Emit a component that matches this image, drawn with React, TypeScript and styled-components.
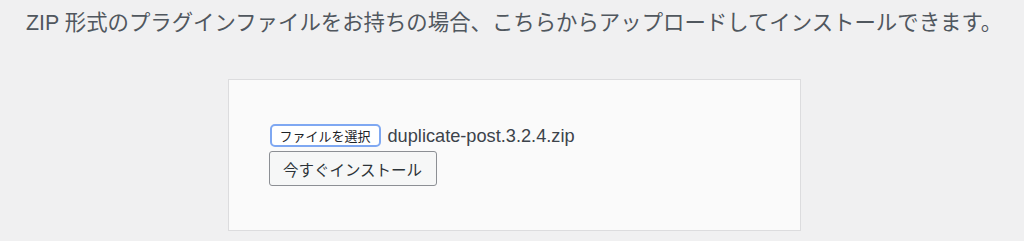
import { FunctionComponent } from "react";
import styled, { createGlobalStyle } from "styled-components";

const GlobalStyle = createGlobalStyle`
  html, body {
    margin: 0;
    padding: 0;
    background: #f0f0f1;
  }
  body {
    font-family: "Liberation Sans", "Noto Sans CJK JP", sans-serif;
    color: #3c434a;
  }
`;

const Page = styled.div`
  width: 1024px;
  height: 241px;
  display: flex;
  flex-direction: column;
  align-items: center;
  overflow: hidden;
`;

const Help = styled.p`
  margin: 0 0 0 4px;
  padding: 8px 0 0;
  font-size: 21.4px;
  line-height: 30px;
  color: #50575e;
  text-align: center;
  white-space: nowrap;
`;

const UploadForm = styled.form`
  box-sizing: border-box;
  width: 573px;
  height: 152px;
  margin: 41px 0 0 4px;
  padding: 44px 40px;
  background: #fafafa;
  border: 1px solid #dcdcde;
  display: flex;
  flex-direction: column;
  align-items: flex-start;
  gap: 4px;
`;

const FileRow = styled.div`
  display: flex;
  align-items: center;
  gap: 7px;
`;

const PickButton = styled.button`
  box-sizing: border-box;
  height: 23px;
  width: 111px;
  padding: 0;
  margin-left: 1px;
  font-family: "Noto Sans CJK JP", sans-serif;
  font-size: 13px;
  line-height: 1;
  white-space: nowrap;
  color: #1d2327;
  background: #ffffff;
  border: 2px solid #7fa8f2;
  border-radius: 5px;
`;

const FileName = styled.span`
  font-size: 18.2px;
  line-height: 22px;
  color: #3c434a;
`;

const InstallButton = styled.button`
  box-sizing: border-box;
  width: 168px;
  height: 39px;
  padding: 0;
  font-family: "Noto Sans CJK JP", sans-serif;
  font-size: 15.5px;
  white-space: nowrap;
  color: #2c3338;
  background: #f6f7f7;
  border: 1px solid #8c8f94;
  border-radius: 3px;
`;

const App: FunctionComponent = () => {
  return (
    <Page>
      <GlobalStyle />
      <Help>ZIP 形式のプラグインファイルをお持ちの場合、こちらからアップロードしてインストールできます。</Help>
      <UploadForm onSubmit={(e) => e.preventDefault()}>
        <FileRow>
          <PickButton type="button">ファイルを選択</PickButton>
          <FileName>duplicate-post.3.2.4.zip</FileName>
        </FileRow>
        <InstallButton type="submit">今すぐインストール</InstallButton>
      </UploadForm>
    </Page>
  );
};

export default App;
